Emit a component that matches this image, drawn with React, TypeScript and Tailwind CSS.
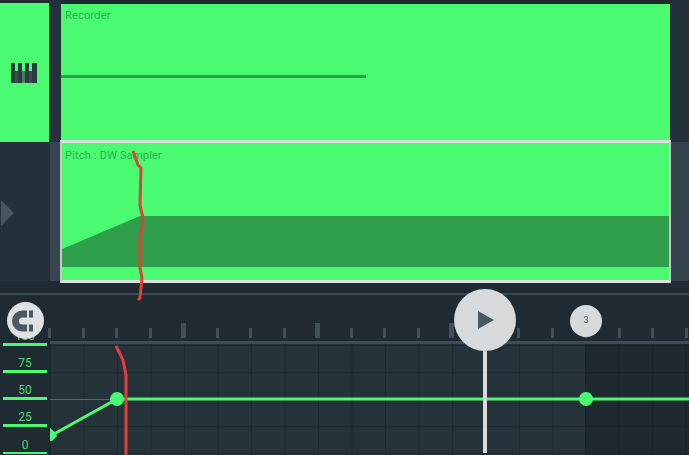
const green = "#4afb72";
const ticks = Array.from({ length: 20 }, (_, i) => i);

function PianoIcon() {
  return (
    <svg width="28" height="22" viewBox="0 0 28 22" className="mr-[1px]" fill="#2a3a40">
      <rect x="1" y="1" width="4" height="20" />
      <rect x="8" y="1" width="4" height="20" />
      <rect x="15" y="1" width="4" height="20" />
      <rect x="22" y="1" width="5" height="20" />
      <rect x="5" y="9" width="3" height="12" fill="#33524a" />
      <rect x="12" y="9" width="3" height="12" fill="#4a7a5c" />
      <rect x="19" y="9" width="3" height="12" fill="#33524a" />
    </svg>
  );
}

function MagnetIcon() {
  return (
    <svg width="22" height="22" viewBox="0 0 22 22" className="mr-[5px]" fill="#4a5861">
      <path d="M15 0.5H10.5A10.5 10.5 0 0 0 10.5 21.5H15V14.5H10.5A3.5 3.5 0 0 1 10.5 7.5H15Z" />
      <rect x="17" y="0.5" width="4" height="7" />
      <rect x="17" y="14.5" width="4" height="7" />
    </svg>
  );
}

export default function App() {
  return (
    <div className="relative h-[455px] w-[689px] overflow-hidden bg-[#1f2a32] font-['Roboto',sans-serif]">
      {/* track 1 */}
      <div className="flex h-[142px]">
        <div className="mt-[3px] flex w-[49px] items-center justify-center bg-[#4afb72]">
          <PianoIcon />
        </div>
        <div className="w-[12px] bg-[#24303a]" />
        <div className="mt-[4px] h-[136px] w-[609px] bg-[#4afb72] pt-[5px]">
          <div className="pl-[4px] text-[11px] leading-[13px] tracking-[0.2px] text-[#2cae54]">Recorder</div>
          <div className="mt-[53px] h-[3px] w-[305px] bg-[#2f9f4b]" />
        </div>
        <div className="flex-1 bg-[#24303a]" />
      </div>

      {/* track 2 */}
      <div className="flex h-[139px]">
        <div className="flex w-[50px] items-center bg-[#24303a]">
          <svg width="14" height="26" viewBox="0 0 14 26" className="mt-[2px]">
            <path d="M1 0L14 13L1 26Z" fill="#47555f" />
          </svg>
        </div>
        <div className="w-[10px] bg-[#36444f]" />
        <div className="z-10 -mt-[2px] h-[143px] w-[611px] border-x-2 border-t-[3px] border-b-[3px] border-x-[#c3cac9] border-t-[#dcdfe0] border-b-[#dcdfe0] bg-[#4afb72]">
          <div className="pl-[3px] pt-[6px] text-[11px] leading-[13px] tracking-[0.2px] text-[#2cae54]">Pitch : DW Sampler</div>
          <svg width="607" height="51" viewBox="0 0 607 51" className="mt-[54px] block">
            <path d="M0 33L78 0H607V51H0Z" fill="#2f9f4b" />
          </svg>
        </div>
        <div className="flex-1 bg-[#36444f]" />
      </div>

      {/* automation */}
      <div className="mt-[12px] h-[2px] bg-[#3b4952]" />
      <div className="flex h-[160px]">
        <div className="flex w-[50px] shrink-0 flex-col justify-end pb-[1px]">
          {["100", "75", "50", "25", "0"].map((label) => (
            <div
              key={label}
              className={`mx-[3px] flex h-[27px] shrink-0 items-end justify-center border-[#4afb72] text-[12px] leading-[14px] text-[#4cd86f] ${label === "0" ? "border-b-2" : "border-b-[3px]"}`}
            >
              {label}
            </div>
          ))}
        </div>
        <div className="flex min-w-0 flex-1 flex-col">
          <div className="-ml-[17px] flex h-[46px] shrink-0 items-end pb-[3px]">
            {ticks.map((i) => (
              <div key={i} className="flex w-[33.5px] shrink-0 justify-center">
                {i % 4 === 0 && i > 0 ? (
                  <div className="h-[15px] w-[5px] bg-[#414f58]" />
                ) : (
                  <div className="h-[10px] w-[3px] bg-[#414f58]" />
                )}
              </div>
            ))}
          </div>
          <div className="h-[3px] shrink-0 bg-[#3f4c55]" />
          <div className="flex flex-1">
            <div className="w-[535px] bg-[#25323a] bg-[linear-gradient(to_right,#1e2930_1px,transparent_1px),linear-gradient(to_bottom,#1e2930_1px,transparent_1px)] bg-[size:33.5px_27px] bg-[position:0_1px]" />
            <div className="flex-1 bg-[#1e2930] bg-[linear-gradient(to_right,#1a242b_1px,transparent_1px),linear-gradient(to_bottom,#1a242b_1px,transparent_1px)] bg-[size:33.5px_27px] bg-[position:0_1px]" />
          </div>
        </div>
      </div>

      {/* automation curve and scribbles */}
      <svg width="689" height="455" viewBox="0 0 689 455" className="absolute left-0 top-0 z-20" fill="none">
        <path d="M50 399.5H117" stroke="#59666e" strokeWidth="1" />
        <path d="M54 434L117 399" stroke={green} strokeWidth="3" />
        <path d="M117 399H689" stroke={green} strokeWidth="3" />
        <path d="M50 428L56 433L57 436L52 441H50Z" fill={green} />
        <circle cx="117" cy="399" r="7" fill={green} />
        <circle cx="586" cy="399" r="7" fill={green} />
        <path
          d="M133 151L138 165L141 168L140 205L142.7 217V225L140 235V268L142 278L141 288L140 298L138 300"
          stroke="#e0403a"
          strokeWidth="3"
        />
        <path d="M116 346L123 360L126 375V455" stroke="#e0403a" strokeWidth="3" />
      </svg>

      {/* overlays */}
      <div className="absolute left-[7px] top-[302px] z-30 flex h-[37px] w-[37px] items-center justify-center rounded-full bg-[#dfe2e4]">
        <MagnetIcon />
      </div>
      <div className="absolute left-[454px] top-[289px] z-30 flex flex-col items-center">
        <div className="flex h-[62px] w-[62px] items-center justify-center rounded-full bg-[#d6dadd]">
          <svg width="16" height="18" viewBox="0 0 16 18" className="ml-[2px]">
            <path d="M0 0L16 9L0 18Z" fill="#4a5862" />
          </svg>
        </div>
        <div className="h-[102px] w-[4px] bg-[#d6dadd]" />
      </div>
      <div className="absolute left-[570px] top-[305px] z-30 flex h-[32px] w-[32px] items-center justify-center rounded-full bg-[#d6dadd] text-[9px] text-[#4a5862]">
        3
      </div>
    </div>
  );
}
